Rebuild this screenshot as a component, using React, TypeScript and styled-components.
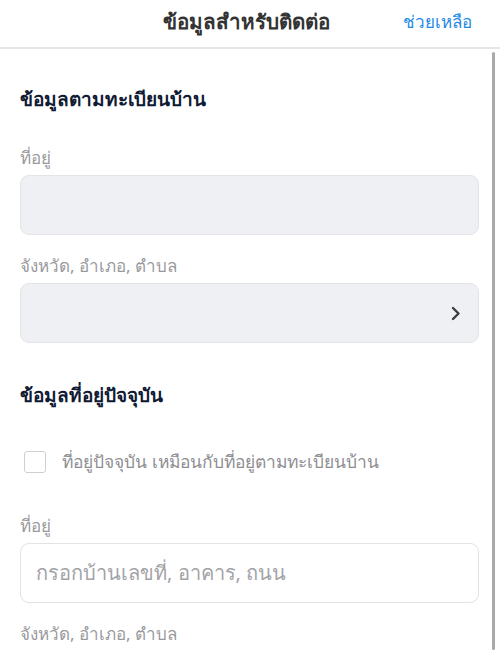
import React from "react";
import styled, { createGlobalStyle } from "styled-components";

const Global = createGlobalStyle`
  html, body { margin: 0; padding: 0; background: #fff; }
  body { font-family: "Noto Sans", "DejaVu Sans", sans-serif; }
  * { box-sizing: border-box; }
`;

const Screen = styled.div`
  position: relative;
  width: 500px;
  height: 650px;
  overflow: hidden;
  background: #fff;
`;

const Header = styled.header`
  height: 49px;
  border-bottom: 2px solid #e6e6e8;
  display: grid;
  grid-template-columns: 1fr auto 1fr;
  align-items: center;
  padding: 0 28px 4px 20px;
`;

const Title = styled.h1`
  grid-column: 2;
  margin: 0;
  font-size: 20.6px;
  font-weight: 700;
  color: #333;
`;

const HelpLink = styled.a`
  grid-column: 3;
  justify-self: end;
  font-size: 17px;
  color: #1e8ae6;
  text-decoration: none;
`;

const Content = styled.main`
  padding: 30px 21px 0 20px;
  display: flex;
  flex-direction: column;
`;

const SectionTitle = styled.h2<{ $top?: number }>`
  margin: ${(p) => p.$top ?? 0}px 0 0;
  font-size: 19px;
  font-weight: 700;
  color: #101a33;
  line-height: 40px;
`;

const Label = styled.div<{ $top: number }>`
  margin-top: ${(p) => p.$top}px;
  margin-bottom: 6px;
  font-size: 17px;
  color: #9a9a9e;
  line-height: 22px;
`;

const Field = styled.div<{ $filled?: boolean }>`
  height: 60px;
  border-radius: 9px;
  border: 1.5px solid ${(p) => (p.$filled ? "#e3e4e8" : "#e2e3e6")};
  background: ${(p) => (p.$filled ? "#eff0f3" : "#fff")};
  display: flex;
  align-items: center;
  justify-content: space-between;
  padding: 0 17px 0 15px;
`;

const Placeholder = styled.span`
  font-size: 20px;
  color: #a3a3a7;
`;

const CheckRow = styled.label`
  margin-top: 33px;
  display: flex;
  align-items: center;
  gap: 16px;
  padding-left: 4px;
`;

const Box = styled.span`
  width: 22px;
  height: 22px;
  border: 1.5px solid #cfcfd3;
  border-radius: 3px;
  background: #fff;
`;

const CheckText = styled.span`
  font-size: 17.4px;
  color: #8e8e93;
`;

const ScrollThumb = styled.div`
  position: absolute;
  right: 5px;
  top: 52px;
  bottom: 0;
  width: 3px;
  background: #a9a9ad;
  border-radius: 2px;
`;

const Chevron = () => (
  <svg width="11" height="15" viewBox="0 0 11 15">
    <path d="M3 2 L8.5 7.5 L3 13" fill="none" stroke="#3c3c40" strokeWidth="2.4" strokeLinecap="round" strokeLinejoin="round" />
  </svg>
);

export default function App() {
  return (
    <Screen>
      <Global />
      <Header>
        <Title>ข้อมูลสำหรับติดต่อ</Title>
        <HelpLink>ช่วยเหลือ</HelpLink>
      </Header>
      <Content>
        <SectionTitle>ข้อมูลตามทะเบียนบ้าน</SectionTitle>
        <Label $top={28}>ที่อยู่</Label>
        <Field $filled />
        <Label $top={20}>จังหวัด, อำเภอ, ตำบล</Label>
        <Field $filled>
          <span />
          <Chevron />
        </Field>
        <SectionTitle $top={32}>ข้อมูลที่อยู่ปัจจุบัน</SectionTitle>
        <CheckRow>
          <Box />
          <CheckText>ที่อยู่ปัจจุบัน เหมือนกับที่อยู่ตามทะเบียนบ้าน</CheckText>
        </CheckRow>
        <Label $top={39}>ที่อยู่</Label>
        <Field>
          <Placeholder>กรอกบ้านเลขที่, อาคาร, ถนน</Placeholder>
        </Field>
        <Label $top={20}>จังหวัด, อำเภอ, ตำบล</Label>
      </Content>
      <ScrollThumb />
    </Screen>
  );
}
